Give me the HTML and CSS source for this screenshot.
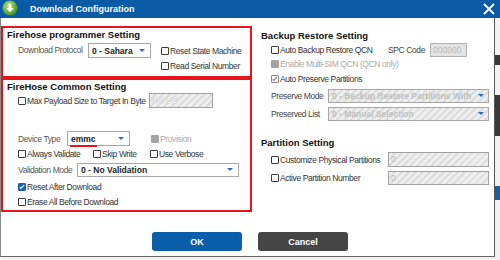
FILE: index.html
```html
<!DOCTYPE html>
<html lang="en">
<head>
  <meta charset="UTF-8" />
  <title>Download Configuration</title>
  <link rel="stylesheet" href="styles.css">
</head>
<body>
  <div class="dialog">
    <div class="titlebar">
      <svg class="app-icon" width="16" height="16" viewBox="0 0 16 16">
        <defs>
          <radialGradient id="g" cx="0.4" cy="0.35" r="0.7">
            <stop offset="0" stop-color="#b6e07a"/>
            <stop offset="0.6" stop-color="#6cb33f"/>
            <stop offset="1" stop-color="#3f8a2a"/>
          </radialGradient>
        </defs>
        <circle cx="8" cy="8" r="7.5" fill="url(#g)"/>
        <path d="M6.6 3.5h2.8v4.6h2.4L8 12.2 4.2 8.1h2.4z" fill="#fff"/>
      </svg>
      <span class="title">Download Configuration</span>
      <svg class="close" width="12" height="12" viewBox="0 0 12 12">
        <path d="M1 1L11 11M11 1L1 11" stroke="#fff" stroke-width="1.8"/>
      </svg>
    </div>

    <div class="content">
      <div class="col-left">
        <div class="group mark g1">
          <div class="heading">Firehose programmer Setting</div>
          <div class="row r-protocol">
            <span class="label w70">Download Protocol</span>
            <div class="select w63"><span>0 - Sahara</span><i class="arrow"></i></div>
            <div class="stack">
              <div class="cb"><span class="box"></span>Reset State Machine</div>
              <div class="cb"><span class="box"></span>Read Serial Number</div>
            </div>
          </div>
        </div>

        <div class="group mark g2">
          <div class="heading h2">FireHose Common Setting</div>
          <div class="row r-payload">
            <div class="cb w131"><span class="box"></span>Max Payload Size to Target In Byte</div>
            <div class="field hatch w64 light">49152</div>
          </div>
          <div class="row r-device">
            <span class="label w49">Device Type</span>
            <div class="select w63"><span>emmc</span><i class="arrow"></i><b class="squiggle"></b></div>
            <div class="cb disabled ml21"><span class="box off"></span>Provision</div>
          </div>
          <div class="row r-flags">
            <div class="cb w75"><span class="box"></span>Always Validate</div>
            <div class="cb w57"><span class="box"></span>Skip Write</div>
            <div class="cb"><span class="box"></span>Use Verbose</div>
          </div>
          <div class="row r-valid">
            <span class="label w59">Validation Mode</span>
            <div class="select w162"><span>0 - No Validation</span><i class="arrow"></i></div>
          </div>
          <div class="row r-reset">
            <div class="cb"><span class="box on"></span>Reset After Download</div>
          </div>
          <div class="row r-erase">
            <div class="cb"><span class="box"></span>Erase All Before Download</div>
          </div>
        </div>
      </div>

      <div class="col-right">
        <div class="heading rh1">Backup Restore Setting</div>
        <div class="row r-qcn">
          <div class="cb w117"><span class="box"></span>Auto Backup Restore QCN</div>
          <span class="label w42">SPC Code</span>
          <div class="field flat w37">000000</div>
        </div>
        <div class="row r-sim">
          <div class="cb disabled"><span class="box off"></span>Enable Multi-SIM QCN (QCN only)</div>
        </div>
        <div class="row r-auto">
          <div class="cb"><span class="box dim"></span>Auto Preserve Partitions</div>
        </div>
        <div class="row r-pmode">
          <span class="label w57">Preserve Mode</span>
          <div class="select hatch w161 dis"><span>0 - Backup Restore Partitions With</span><i class="arrow"></i></div>
        </div>
        <div class="row r-plist">
          <span class="label w57">Preserved List</span>
          <div class="select hatch w161 dis"><span>0 - Manual Selection</span><i class="arrow"></i></div>
        </div>
        <div class="heading rh2">Partition Setting</div>
        <div class="row r-cust">
          <div class="cb w117"><span class="box"></span>Customize Physical Partitions</div>
          <div class="field hatch w101">0</div>
        </div>
        <div class="row r-active">
          <div class="cb w117"><span class="box"></span>Active Partition Number</div>
          <div class="field hatch w101">0</div>
        </div>
      </div>
    </div>

    <div class="footer">
      <button class="btn ok">OK</button>
      <button class="btn cancel">Cancel</button>
    </div>
  </div>
</body>
</html>
```

FILE: styles.css
```css
body {
  margin: 0;
  width: 500px;
  height: 260px;
  overflow: hidden;
  font-family: 'Liberation Sans', Arial, sans-serif;
  font-size: 8.5px;
  color: #333;
  background:
    linear-gradient(to bottom,
      #0b5aa6 0 18px, #f2f2f2 18px 55px, #3a3a3a 55px 65px,
      #f2f2f2 65px 95px, #3a3a3a 95px 136px, #f2f2f2 136px 186px,
      #1d5fa5 186px 200px, #f2f2f2 200px);
}

.dialog {
  width: 495px;
  height: 257px;
  background: #fff;
  border-left: 1px solid #8a8a8a;
  border-right: 1px solid #555;
  border-bottom: 1px solid #666;
  box-sizing: border-box;
  display: flex;
  flex-direction: column;
}

.titlebar {
  height: 18px;
  flex: none;
  background: #0b5aa6;
  display: flex;
  align-items: center;
  margin-left: -1px;
  width: 501px;
}

.app-icon {
  margin-left: 2px;
  margin-top: -2px;
}

.title {
  margin-left: 12px;
  font-weight: bold;
  font-size: 9px;
  color: #fff;
}

.close {
  margin-left: auto;
  margin-right: 6px;
}

.content {
  display: flex;
  padding-top: 8px;
  height: 188px;
  flex: none;
}

.col-left {
  width: 251px;
  flex: none;
}

.group {
  border: 2px solid #e8141b;
  padding-left: 4px;
}

.g1 {
  height: 48px;
}

.g2 {
  height: 130px;
}

.heading {
  font-weight: bold;
  font-size: 9.5px;
  color: #111;
  height: 14px;
  line-height: 14px;
}

.h2 {
  height: 13px;
  line-height: 13px;
}

.row {
  display: flex;
  align-items: center;
  padding-left: 11px;
}

.label,
.cb {
  letter-spacing: -0.4px;
  white-space: nowrap;
  flex: none;
}

.label {
  color: #555;
}

.r-protocol {
  margin-top: 1px;
  align-items: flex-start;
}

.r-protocol .label {
  line-height: 15px;
}

.stack {
  margin-left: 10px;
}

.stack .cb {
  height: 15px;
}

.r-payload {
  height: 15px;
}

.r-device {
  height: 15px;
  margin-top: 23px;
}

.r-flags {
  height: 14px;
  margin-top: 1px;
}

.r-valid {
  height: 14px;
  margin-top: 2px;
}

.r-reset {
  height: 15px;
  margin-top: 2px;
}

.r-erase {
  height: 15px;
}

.cb {
  display: flex;
  align-items: center;
  color: #333;
}

.cb.disabled {
  color: #aaa;
}

.box {
  position: relative;
  width: 6px;
  height: 6px;
  border: 1px solid #3a3a3a;
  border-radius: 1px;
  background: #fff;
  margin-right: 1px;
  flex: none;
}

.box.on {
  background: #1e62b4;
  border-color: #1e62b4;
}

.box.on::after,
.box.dim::after {
  content: "";
  position: absolute;
  left: 2px;
  top: 0;
  width: 1px;
  height: 4px;
  border: solid #fff;
  border-width: 0 1px 1px 0;
  transform: rotate(45deg);
}

.box.dim {
  border-color: #8a8a8a;
}

.box.dim::after {
  border-color: #777;
}

.box.off {
  background: #a4a4a4;
  border-color: #a4a4a4;
}

.select {
  position: relative;
  display: flex;
  align-items: center;
  height: 15px;
  box-sizing: border-box;
  border: 1px solid #a7a7a7;
  background: #fff;
  padding-left: 3px;
  font-weight: bold;
  font-size: 8.5px;
  color: #222;
  flex: none;
  overflow: hidden;
  white-space: nowrap;
}

.r-valid .select,
.r-pmode .select,
.r-plist .select {
  height: 14px;
}

.select.dis {
  color: #c0c0c0;
}

.arrow {
  position: absolute;
  right: 5px;
  top: 50%;
  margin-top: -2px;
  border-left: 3px solid transparent;
  border-right: 3px solid transparent;
  border-top: 3px solid #2a6ebb;
}

.select.dis .arrow {
  right: 4px;
}

.squiggle {
  position: absolute;
  left: 2px;
  bottom: -2px;
  width: 27px;
  height: 2px;
  background: #e8141b;
}

.select:has(.squiggle) {
  overflow: visible;
}

.field {
  height: 15px;
  box-sizing: border-box;
  border: 1px solid #a0a0a0;
  padding-left: 2px;
  line-height: 13px;
  color: #bdbdbd;
  font-size: 8.5px;
  flex: none;
}

.hatch {
  background: repeating-linear-gradient(135deg, #eeeeee 0 3px, #dcdcdc 3px 5px);
}

.field.light {
  color: #fff;
  letter-spacing: 0.3px;
  text-shadow: 0 0 1px #8c8c8c;
}

.field.flat {
  background: #e3e3e3;
  border-color: #b0b0b0;
  color: #b9b9b9;
  height: 14px;
}

.w37 { width: 37px; }
.w42 { width: 42px; }
.w49 { width: 49px; }
.w57 { width: 57px; }
.w59 { width: 59px; }
.w63 { width: 63px; }
.w64 { width: 64px; }
.w70 { width: 70px; }
.w75 { width: 75px; }
.w101 { width: 101px; }
.w117 { width: 117px; }
.w131 { width: 131px; }
.w161 { width: 161px; }
.w162 { width: 162px; }
.ml21 { margin-left: 21px; }

.col-right {
  padding-left: 9px;
  flex: 1;
}

.col-right .row {
  padding-left: 10px;
}

.col-right .label {
  color: #444;
}

.rh1 {
  margin-top: 3px;
}

.r-qcn {
  height: 14px;
}

.r-sim {
  height: 14px;
}

.r-auto {
  height: 16px;
}

.r-pmode {
  height: 14px;
  margin-top: 2px;
}

.r-plist {
  height: 14px;
  margin-top: 4px;
}

.rh2 {
  margin-top: 15px;
}

.r-cust {
  height: 15px;
  margin-top: 2px;
}

.r-active {
  height: 14px;
  margin-top: 4px;
}

.r-active .field {
  height: 14px;
}

.footer {
  display: flex;
  padding-left: 151px;
  gap: 16px;
  margin-top: 18px;
}

.btn {
  width: 90px;
  height: 19px;
  border: none;
  border-radius: 3px;
  color: #fff;
  font-family: 'Liberation Sans', Arial, sans-serif;
  font-weight: bold;
  font-size: 9px;
  padding: 0;
}

.ok {
  background: #0b5eaa;
}

.cancel {
  background: #454545;
}
```
